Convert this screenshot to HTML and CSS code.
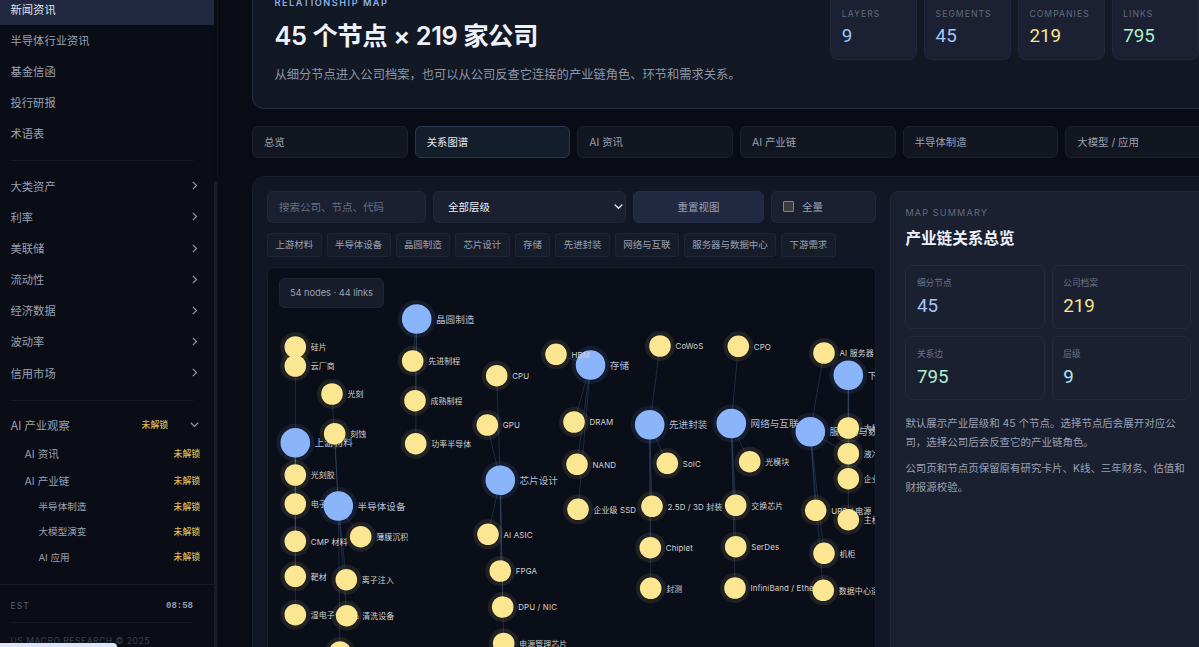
FILE: index.html
```html
<!DOCTYPE html>
<html lang="zh-CN">
<head>
<meta charset="utf-8">
<title>AI 产业链 - 关系图谱</title>
<link rel="stylesheet" href="styles.css">
</head>
<body>
<div class="app">
  <aside class="sidebar">
    <nav class="nav">
      <a class="nav-item active">新闻资讯</a>
      <a class="nav-item">半导体行业资讯</a>
      <a class="nav-item">基金信函</a>
      <a class="nav-item">投行研报</a>
      <a class="nav-item">术语表</a>
      <div class="divider"></div>
      <a class="nav-item">大类资产<svg class="chev" viewBox="0 0 8 8"><path d="M2.5 .8 5.8 4 2.5 7.2"/></svg></a>
      <a class="nav-item">利率<svg class="chev" viewBox="0 0 8 8"><path d="M2.5 .8 5.8 4 2.5 7.2"/></svg></a>
      <a class="nav-item">美联储<svg class="chev" viewBox="0 0 8 8"><path d="M2.5 .8 5.8 4 2.5 7.2"/></svg></a>
      <a class="nav-item">流动性<svg class="chev" viewBox="0 0 8 8"><path d="M2.5 .8 5.8 4 2.5 7.2"/></svg></a>
      <a class="nav-item">经济数据<svg class="chev" viewBox="0 0 8 8"><path d="M2.5 .8 5.8 4 2.5 7.2"/></svg></a>
      <a class="nav-item">波动率<svg class="chev" viewBox="0 0 8 8"><path d="M2.5 .8 5.8 4 2.5 7.2"/></svg></a>
      <a class="nav-item">信用市场<svg class="chev" viewBox="0 0 8 8"><path d="M2.5 .8 5.8 4 2.5 7.2"/></svg></a>
      <div class="divider"></div>
      <a class="nav-item group">AI 产业观察<span class="lock">未解锁</span><svg class="chev" viewBox="0 0 8 8"><path d="M.8 2.4 4 5.7 7.2 2.4"/></svg></a>
      <a class="nav-sub">AI 资讯<span class="lock">未解锁</span></a>
      <a class="nav-sub">AI 产业链<span class="lock">未解锁</span></a>
      <a class="nav-leaf">半导体制造<span class="lock">未解锁</span></a>
      <a class="nav-leaf">大模型演变<span class="lock">未解锁</span></a>
      <a class="nav-leaf">AI 应用<span class="lock">未解锁</span></a>
    </nav>
    <div class="side-foot">
      <div class="clock"><span>EST</span><b>08:58</b></div>
      <div class="copy">US MACRO RESEARCH © 2025</div>
    </div>
  </aside>
  <div class="side-scroll"><div class="side-thumb"></div></div>

  <main class="main">
    <section class="hero">
      <div class="hero-text">
        <div class="eyebrow">RELATIONSHIP MAP</div>
        <h1>45 个节点 × 219 家公司</h1>
        <p>从细分节点进入公司档案，也可以从公司反查它连接的产业链角色、环节和需求关系。</p>
      </div>
      <div class="stats">
        <div class="stat"><span>LAYERS</span><b class="blue">9</b></div>
        <div class="stat"><span>SEGMENTS</span><b class="blue">45</b></div>
        <div class="stat"><span>COMPANIES</span><b class="yellow">219</b></div>
        <div class="stat"><span>LINKS</span><b class="green">795</b></div>
      </div>
    </section>

    <div class="tabs">
      <a class="tab">总览</a>
      <a class="tab on">关系图谱</a>
      <a class="tab">AI 资讯</a>
      <a class="tab">AI 产业链</a>
      <a class="tab">半导体制造</a>
      <a class="tab">大模型 / 应用</a>
    </div>

    <section class="workspace">
      <div class="map">
        <div class="toolbar">
          <div class="field search">搜索公司、节点、代码</div>
          <div class="field select">全部层级<svg class="arrow" viewBox="0 0 8 8"><path d="M.6 2.2 4 5.6 7.4 2.2"/></svg></div>
          <div class="field reset">重置视图</div>
          <div class="field check"><i class="box"></i>全量</div>
        </div>
        <div class="chips">
          <span class="chip">上游材料</span>
          <span class="chip">半导体设备</span>
          <span class="chip">晶圆制造</span>
          <span class="chip">芯片设计</span>
          <span class="chip">存储</span>
          <span class="chip">先进封装</span>
          <span class="chip">网络与互联</span>
          <span class="chip">服务器与数据中心</span>
          <span class="chip">下游需求</span>
        </div>
        <div class="canvas">
          <svg id="graph" class="graph" width="607" height="400" viewBox="268 268 607 400"></svg>
          <div class="counter">54 nodes · 44 links</div>
        </div>
      </div>

      <aside class="summary">
        <div class="label">MAP SUMMARY</div>
        <h2>产业链关系总览</h2>
        <div class="cards">
          <div class="card"><span>细分节点</span><b class="blue">45</b></div>
          <div class="card"><span>公司档案</span><b class="yellow">219</b></div>
          <div class="card"><span>关系边</span><b class="green">795</b></div>
          <div class="card"><span>层级</span><b class="cyan">9</b></div>
        </div>
        <p>默认展示产业层级和 45 个节点。选择节点后会展开对应公司，选择公司后会反查它的产业链角色。</p>
        <p>公司页和节点页保留原有研究卡片、K线、三年财务、估值和财报源校验。</p>
      </aside>
    </section>
  </main>
</div>
<div class="status"></div>
<script src="graph.js"></script>
</body>
</html>
```
FILE: styles.css
```css
*{
  margin:0;
  padding:0;
  box-sizing:border-box;
}
body{
  width:1199px;
  height:647px;
  overflow:hidden;
  background:#090c14;
  color:#98a0b3;
  font-family:Inter, "Noto Sans CJK SC", sans-serif;
  font-size:11.3px;
}
.app{
  display:flex;
  height:647px;
  overflow:hidden;
}
.blue{ color:#a3c4fa; }
.yellow{ color:#f7e68e; }
.green{ color:#b0efc9; }
.cyan{ color:#b7e6fb; }

/* sidebar */
.sidebar{
  width:214px;
  flex:none;
  background:#0a0d15;
}
.nav{
  height:591px;
  margin-top:-6px;
  border-bottom:1px solid #171b24;
}
.nav-item{
  display:flex;
  align-items:center;
  height:31.15px;
  padding:0 15px 2px 10.5px;
}
.nav-item.active{
  background:#20273f;
  color:#dde2ef;
}
.chev{
  width:9px;
  height:9px;
  margin-left:auto;
  fill:none;
  stroke:#8c94a6;
  stroke-width:1.1;
}
.divider{
  height:1px;
  margin:10.5px 21px 10px 11px;
  background:#161a23;
}
.lock{
  margin-left:auto;
  color:#d9bd56;
  font-size:8.8px;
  font-weight:500;
}
.group{
  height:30.6px;
}
.group .chev{
  margin-left:22px;
}
.nav-sub, .nav-leaf{
  display:flex;
  align-items:center;
  height:26.4px;
  padding:0 14px 1px 24.5px;
  font-size:10.6px;
}
.nav-leaf{
  height:25.2px;
  padding-left:38.5px;
  font-size:9.6px;
}
.side-foot{
  padding:0 21px 0 10.5px;
  font-size:8.7px;
  letter-spacing:1px;
  color:#565d6c;
}
.clock{
  display:flex;
  align-items:center;
  justify-content:space-between;
  height:38px;
  padding-top:4px;
  border-bottom:1px solid #141821;
}
.clock b{
  font-family:"Liberation Mono", monospace;
  font-size:9px;
  letter-spacing:0;
  color:#9199ab;
}
.copy{
  padding-top:13px;
  font-size:8.6px;
  letter-spacing:.48px;
  color:#3b404d;
  white-space:nowrap;
}
.side-scroll{
  width:4px;
  flex:none;
  padding-top:181px;
  border-right:1px solid #10141c;
}
.side-thumb{
  height:470px;
  background:#1a1d26;
  border-radius:2px 2px 0 0;
}

/* main column */
.main{
  width:969px;
  flex:none;
  margin-left:34px;
}
.hero{
  display:flex;
  justify-content:space-between;
  height:109px;
  padding:0 21.5px 0 21.5px;
  background:#121824;
  border:1px solid #202b42;
  border-top:none;
  border-radius:0 0 12px 12px;
}
.eyebrow{
  margin-top:-4px;
  font-size:9.2px;
  line-height:14px;
  font-weight:600;
  letter-spacing:1.5px;
  color:#8cb0e8;
}
h1{
  margin-top:7px;
  font-size:25.4px;
  line-height:38px;
  font-weight:600;
  letter-spacing:-.45px;
  color:#eff2fa;
}
.hero p{
  margin-top:10px;
  font-size:12.28px;
  line-height:20px;
  color:#8d95a7;
}
.stats{
  display:flex;
  gap:7px;
}
.stat{
  width:86.8px;
  height:60px;
  padding:8px 10px 0 10.5px;
  background:#1b2032;
  border:1px solid #222839;
  border-top:none;
  border-radius:0 0 8px 8px;
}
.stat span, .stat b, .card span, .card b{
  display:block;
}
.stat span{
  font-size:8.6px;
  line-height:12px;
  letter-spacing:1.05px;
  color:#636b7c;
}
.stat b, .card b{
  font-family:Roboto, sans-serif;
  font-size:18.8px;
  line-height:22px;
  font-weight:400;
}
.stat b{
  margin-top:5px;
}
.tabs{
  display:grid;
  grid-template-columns:repeat(6, 1fr);
  gap:7px;
  margin-top:17px;
}
.tab{
  height:32px;
  padding-left:11px;
  font-size:10.4px;
  line-height:31px;
  background:#111621;
  border:1px solid #1a202c;
  border-radius:6px;
}
.tab.on{
  background:#141d2b;
  border-color:#2a3852;
  color:#e2e7f2;
}
.workspace{
  display:flex;
  gap:14px;
  height:560px;
  margin-top:18px;
  padding:14px;
  background:#111724;
  border:1px solid #191f2c;
  border-radius:12px;
}
.map{
  width:609.4px;
  flex:none;
}
.toolbar{
  display:grid;
  grid-template-columns:159px 193px 131px 105.4px;
  gap:7px;
}
.field{
  display:flex;
  align-items:center;
  height:32px;
  padding:0 11px 2px;
  font-size:10.5px;
  background:#1b2031;
  border:1px solid #22283a;
  border-radius:6px;
}
.search{
  color:#666e80;
}
.select{
  padding:0 2px 2px 14px;
  color:#e8ebf3;
}
.arrow{
  width:9px;
  height:9px;
  margin-left:auto;
  fill:none;
  stroke:#e0e4ee;
  stroke-width:1.1;
}
.reset{
  justify-content:center;
  background:#212842;
  border-color:#262e47;
}
.box{
  width:11px;
  height:11px;
  margin-right:8px;
  background:#3b3b3b;
  border:1px solid #858585;
  border-radius:1px;
}
.chips{
  display:flex;
  gap:5px;
  margin-top:10px;
}
.chip{
  height:24px;
  padding:0 7.4px;
  font-size:9.45px;
  line-height:21px;
  white-space:nowrap;
  background:#161c29;
  border:1px solid #1f2532;
  border-radius:3px;
}
.canvas{
  position:relative;
  height:400px;
  margin-top:9.5px;
  overflow:hidden;
  background:#090e19;
  border:1px solid #171d29;
  border-radius:7px;
}
.graph{
  display:block;
}
.counter{
  position:absolute;
  left:11px;
  top:10px;
  height:30px;
  padding:0 10px;
  font-size:9.3px;
  line-height:28px;
  letter-spacing:-.05px;
  background:#171d2b;
  border:1px solid #1d2331;
  border-radius:5px;
}
.link{
  stroke:#4a6490;
  stroke-opacity:.34;
  stroke-width:1;
}
.layer{
  fill:#8bb5fb;
}
.segment{
  fill:#fbe692;
}
.layer-halo{
  fill:#8bb5fb;
  fill-opacity:.09;
}
.segment-halo{
  fill:#fbe692;
  fill-opacity:.09;
}
.layer-text{
  font-size:9.6px;
  fill:#aebdd7;
}
.segment-text{
  font-size:7.95px;
  letter-spacing:.1px;
  fill:#d2d2cd;
}

/* right panel */
.summary{
  flex:1;
  padding:14px;
  background:#1b2031;
  border:1px solid #22283a;
  border-radius:8px;
}
.label{
  font-size:9.1px;
  line-height:14px;
  letter-spacing:1.15px;
  color:#636b7c;
}
h2{
  margin-top:7px;
  font-size:15.6px;
  line-height:24px;
  font-weight:700;
  color:#eff2fa;
}
.cards{
  display:grid;
  grid-template-columns:1fr 1fr;
  gap:7px;
  margin:14px 0 13.5px;
}
.card{
  height:64px;
  padding:10.5px 10.5px;
  border:1px solid #242a3b;
  border-radius:7px;
}
.card span{
  font-size:8.7px;
  line-height:13px;
  color:#6b7385;
}
.card b{
  margin-top:5px;
}
.summary p{
  margin-bottom:6.6px;
  font-size:10.48px;
  line-height:19.2px;
}

.status{
  position:absolute;
  left:0;
  bottom:0;
  width:117px;
  height:4px;
  background:#dfe5f8;
  border-radius:0 4px 0 0;
}
```
FILE: graph.js
```js
// each group: the layer node first, then its segments [name, x, y]
var groups = [
  [["上游材料",295.3,442.7],["硅片",295.3,347],["光刻胶",295.3,475],["电子特气",295.3,504],["CMP 材料",295.3,541.3],["靶材",295.3,576.3],["湿电子化学品",295.3,614.7]],
  [["半导体设备",338.3,506],["光刻",332,394],["刻蚀",334.7,433.7],["薄膜沉积",360.7,536.7],["离子注入",346.3,579.7],["清洗设备",346.7,615.7],["",340,652]],
  [["晶圆制造",416.7,319],["先进制程",412.7,361],["成熟制程",415,400.7],["功率半导体",415.7,443.7]],
  [["芯片设计",500.3,480.3],["CPU",496.7,375.7],["GPU",487.3,425],["AI ASIC",488,534.3],["FPGA",500.3,571],["DPU / NIC",502.7,607],["电源管理芯片",503.7,643.5]],
  [["存储",590.5,365],["HBM",556,354.3],["DRAM",574,422],["NAND",577,464.3],["企业级 SSD",578,509.3]],
  [["先进封装",649.7,424.7],["CoWoS",660,346],["SoIC",667.3,463.3],["2.5D / 3D 封装",652,506.3],["Chiplet",650.3,547.7],["封测",650.7,588.3]],
  [["网络与互联",731.3,423.5],["CPO",738.3,346.3],["光模块",749.7,461.7],["交换芯片",735.7,505.3],["SerDes",735.7,546.7],["InfiniBand / Ethernet",735,588]],
  [["服务器与数据中心",810.3,431.7],["AI 服务器",824,353],["液冷",848.3,453.7],["UPS / 电源",815.7,510.3],["机柜",824,553.3],["数据中心运营",823.3,590.3]],
  [["下游需求",848.3,375.3],["云厂商",295.3,366],["大模型",848.3,428],["企业应用",848.3,478.7],["主权 AI",848.3,519.7]]
];
var links = "";
var nodes = "";
function circle(cls, n, r) {
  return '<circle class="' + cls + '" cx="' + n[1] + '" cy="' + n[2] + '" r="' + r + '"/>';
}
for (var i = 0; i < groups.length; i++) {
  var root = groups[i][0];
  for (var j = 0; j < groups[i].length; j++) {
    var n = groups[i][j];
    var type = j == 0 ? "layer" : "segment";
    var r = j == 0 ? 14.8 : 10.8;
    var dx = j == 0 ? 19.3 : 15.5;
    if (j > 0 && n[0] != "云厂商") {
      links += '<line class="link" x1="' + root[1] + '" y1="' + root[2] + '" x2="' + n[1] + '" y2="' + n[2] + '"/>';
    }
    nodes += circle(type + "-halo", n, r + 4.2) + circle(type, n, r);
    if (n[0]) {
      nodes += '<text class="' + type + '-text" x="' + (n[1] + dx) + '" y="' + (n[2] + (j == 0 ? 3.7 : 3.2)) + '">' + n[0] + '</text>';
    }
  }
}
document.getElementById("graph").innerHTML = links + nodes;
```
